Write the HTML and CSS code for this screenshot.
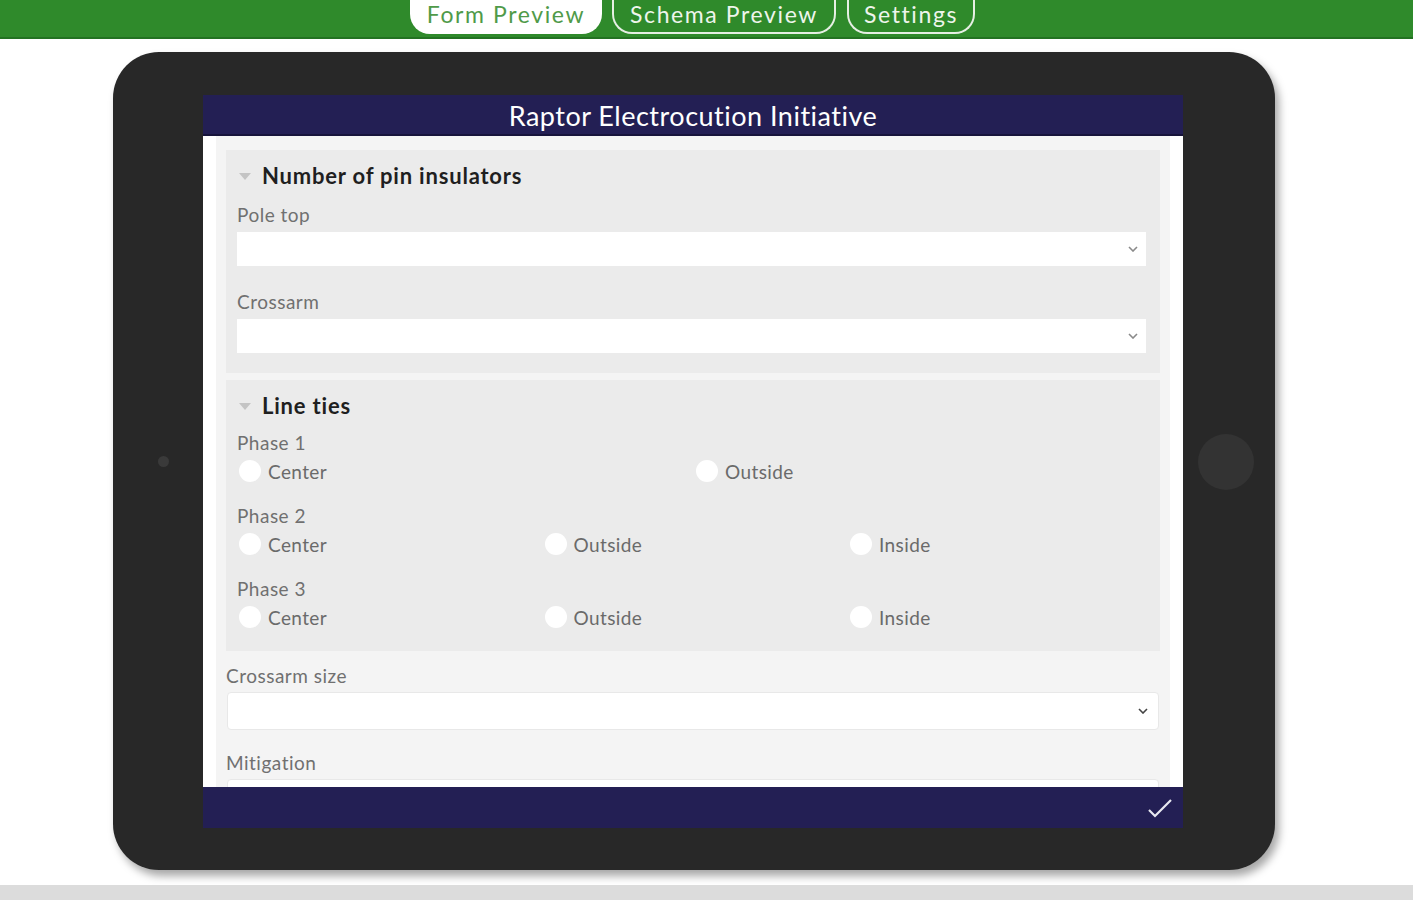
FILE: index.html
```html
<!DOCTYPE html>
<html>
<head>
<meta charset="utf-8">
<link rel="stylesheet" href="styles.css">
</head>
<body>
<div class="topbar">
  <div class="tabs">
    <div class="tab active">Form Preview</div>
    <div class="tab tab-schema">Schema Preview</div>
    <div class="tab tab-settings">Settings</div>
  </div>
</div>
<div class="stage">
  <div class="tablet">
    <div class="bezel-left"><span class="camera"></span></div>
    <div class="screen">
      <div class="screen-head">Raptor Electrocution Initiative</div>
      <div class="screen-body">
        <div class="panel">
          <div class="group group-pins">
            <div class="group-title"><span class="tri"></span>Number of pin insulators</div>
            <div class="label">Pole top</div>
            <div class="select"><svg class="chev" viewBox="0 0 10 6"><polyline points="1,1 5,5 9,1"/></svg></div>
            <div class="label label-gap">Crossarm</div>
            <div class="select"><svg class="chev" viewBox="0 0 10 6"><polyline points="1,1 5,5 9,1"/></svg></div>
          </div>
          <div class="group group-ties">
            <div class="group-title"><span class="tri"></span>Line ties</div>
            <div class="label first-phase">Phase 1</div>
            <div class="radios two">
              <div class="radio"><span class="dot"></span>Center</div>
              <div class="radio"><span class="dot"></span>Outside</div>
            </div>
            <div class="label phase">Phase 2</div>
            <div class="radios three">
              <div class="radio"><span class="dot"></span>Center</div>
              <div class="radio"><span class="dot"></span>Outside</div>
              <div class="radio"><span class="dot"></span>Inside</div>
            </div>
            <div class="label phase">Phase 3</div>
            <div class="radios three">
              <div class="radio"><span class="dot"></span>Center</div>
              <div class="radio"><span class="dot"></span>Outside</div>
              <div class="radio"><span class="dot"></span>Inside</div>
            </div>
          </div>
          <div class="field">
            <div class="label">Crossarm size</div>
            <div class="select wide"><svg class="chev dark" viewBox="0 0 10 6"><polyline points="1,1 5,5 9,1"/></svg></div>
            <div class="label label-gap2">Mitigation</div>
            <div class="select wide"></div>
          </div>
        </div>
      </div>
      <div class="screen-foot">
        <svg class="check" viewBox="0 0 26 20"><polyline points="2,12 8,18 24,2"/></svg>
      </div>
    </div>
    <div class="bezel-right"><span class="home"></span></div>
  </div>
</div>
<div class="bottom-strip"></div>
</body>
</html>
```

FILE: styles.css
```css
* { box-sizing: border-box; }
html, body { margin: 0; padding: 0; }
body {
  width: 1413px;
  height: 900px;
  overflow: hidden;
  background: #ffffff;
  font-family: Lato, "Open Sans", sans-serif;
  display: flex;
  flex-direction: column;
}
.topbar {
  height: 39px;
  background: #2f8a2b;
  border-bottom: 2px solid #237222;
  overflow: hidden;
  flex: none;
}
.tabs {
  display: flex;
  align-items: flex-start;
  height: 100%;
  padding-left: 410px;
  gap: 10px;
}
.tab {
  height: 34px;
  border: 2px solid #e6efe4;
  border-top: none;
  border-radius: 0 0 20px 20px;
  color: #eef5ec;
  font-size: 23px;
  line-height: 23px;
  letter-spacing: 1.6px;
  display: flex;
  align-items: flex-end;
  justify-content: center;
  padding-bottom: 6px;
  flex: none;
}
.tab.active {
  width: 192px;
  background: #ffffff;
  border-color: #ffffff;
  color: #4f9a49;
}
.tab-schema { width: 224px; }
.tab-settings { width: 128px; margin-left: 1px; }

.stage {
  flex: 1;
  padding: 13px 0 0 113px;
}
.tablet {
  width: 1162px;
  height: 818px;
  background: #282828;
  border-radius: 46px;
  box-shadow: 4px 6px 8px rgba(0,0,0,0.35);
  display: grid;
  grid-template-columns: 90px 980px 92px;
  padding: 43px 0 42px;
}
.bezel-left, .bezel-right {
  display: flex;
  align-items: center;
  justify-content: center;
}
.camera {
  width: 11px; height: 11px; border-radius: 50%;
  background: #3a3a3a;
  margin-left: 10px;
}
.home {
  width: 56px; height: 56px; border-radius: 50%;
  background: #333333;
  margin-right: 6px;
}
.screen {
  display: flex;
  flex-direction: column;
  background: #ffffff;
  overflow: hidden;
}
.screen-head {
  height: 41px;
  background: #231f54;
  border-bottom: 2px solid #17143b;
  color: #ffffff;
  font-size: 27px;
  letter-spacing: 0.5px;
  display: flex;
  align-items: center;
  justify-content: center;
  padding-top: 2px;
  flex: none;
}
.screen-body {
  flex: 1;
  overflow: hidden;
  padding: 0 13px 0 13px;
  background: #ffffff;
}
.panel {
  background: #f4f4f4;
  padding: 14px 10px 0 10px;
  height: 100%;
}
.group {
  background: #ebebeb;
  padding: 10px 6px 0 11px;
}
.group-pins { height: 223px; }
.group-ties { height: 271px; margin-top: 7px; }
.group-title {
  font-size: 22px;
  font-weight: 700;
  letter-spacing: 0.8px;
  color: #1f1f1f;
  display: flex;
  align-items: center;
  height: 30px;
}
.tri {
  width: 0; height: 0;
  border-left: 6px solid transparent;
  border-right: 6px solid transparent;
  border-top: 7px solid #c4c4c4;
  margin: 2px 11px 0 2px;
}
.label {
  font-size: 19px;
  letter-spacing: 0.5px;
  color: #707070;
  height: 26px;
  display: flex;
  align-items: center;
  margin-top: 11px;
}
.label-gap { margin-top: 22px; }
.select {
  height: 34px;
  background: #ffffff;
  margin: 5px 8px 0 0;
  display: flex;
  align-items: center;
  justify-content: flex-end;
  padding-right: 8px;
}
.chev {
  width: 10px; height: 6px;
  fill: none;
  stroke: #8a8a8a;
  stroke-width: 1.6;
}
.chev.dark { stroke: #444; }
.radios {
  display: grid;
  height: 32px;
  margin-top: 0;
  padding-left: 2px;
}
.radios.two { grid-template-columns: 457px 457px; }
.radios.three { grid-template-columns: 305.5px 305.5px 305.5px; }
.radio {
  display: flex;
  align-items: center;
  font-size: 19px;
  letter-spacing: 0.4px;
  color: #6a6a6a;
}
.dot {
  width: 22px; height: 22px;
  border-radius: 50%;
  background: #ffffff;
  margin-right: 7px;
  flex: none;
}
.first-phase { margin-top: 9px; }
.phase { margin-top: 15px; }
.field {
  padding: 11px 1px 0 0;
}
.field .label { margin-top: 0; }
.field .label-gap2 { margin-top: 19px; }
.select.wide {
  height: 38px;
  margin: 4px 0 0 1px;
  border: 1px solid #e8e8e8;
  border-radius: 4px;
  padding-right: 10px;
}
.screen-foot {
  height: 41px;
  background: #231f54;
  display: flex;
  align-items: center;
  justify-content: flex-end;
  padding-right: 10px;
  flex: none;
}
.check {
  width: 26px; height: 20px;
  fill: none;
  stroke: #e8e8f0;
  stroke-width: 2.2;
}
.bottom-strip {
  height: 15px;
  background: #dcdcdc;
  flex: none;
}
```
